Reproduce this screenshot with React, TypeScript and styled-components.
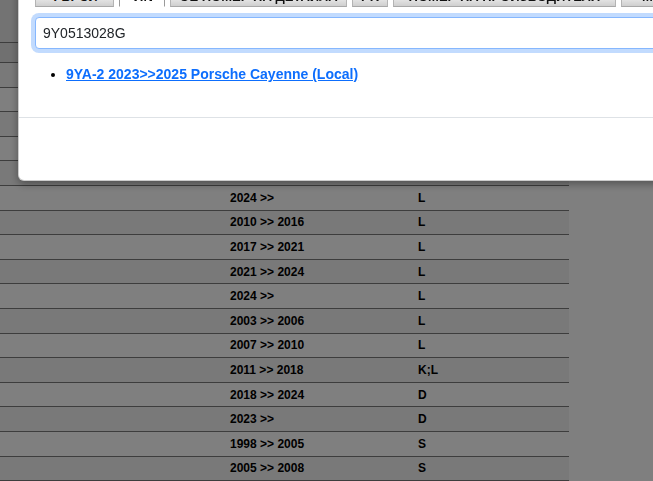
import { useEffect, useRef } from 'react';
import styled, { createGlobalStyle } from 'styled-components';

const GlobalStyle = createGlobalStyle`
  html, body {
    margin: 0;
    padding: 0;
    background: #fff;
    overflow: hidden;
    font-family: 'Liberation Sans', Arial, sans-serif;
  }
`;

const tabs = [
  { label: 'ТЪРСИ', width: 79, active: false },
  { label: 'VIN', width: 46, active: true },
  { label: 'OE НОМЕР НА ДЕТАЙЛА', width: 177, active: false },
  { label: 'PR', width: 36, active: false },
  { label: 'НОМЕР НА ПРОИЗВОДИТЕЛЯ', width: 223, active: false },
  { label: 'МОДЕЛ', width: 90, active: false },
];

const rows = [
  { years: '2018 >> 2022', code: 'L' },
  { years: '2022 >>', code: 'L' },
  { years: '2014 >> 2018', code: 'L' },
  { years: '2018 >> 2023', code: 'L' },
  { years: '2023 >>', code: 'L' },
  { years: '2024 >>', code: 'L' },
  { years: '2010 >> 2016', code: 'L' },
  { years: '2017 >> 2021', code: 'L' },
  { years: '2021 >> 2024', code: 'L' },
  { years: '2024 >>', code: 'L' },
  { years: '2003 >> 2006', code: 'L' },
  { years: '2007 >> 2010', code: 'L' },
  { years: '2011 >> 2018', code: 'K;L' },
  { years: '2018 >> 2024', code: 'D' },
  { years: '2023 >>', code: 'D' },
  { years: '1998 >> 2005', code: 'S' },
  { years: '2005 >> 2008', code: 'S' },
];

const App = () => {
  const inputRef = useRef<HTMLInputElement>(null);

  useEffect(() => {
    const el = inputRef.current;
    if (el) {
      el.focus();
      el.setSelectionRange(el.value.length, el.value.length);
    }
  }, []);

  return (
    <>
      <GlobalStyle />
      <Page>
        <TopArea />
        <Table>
          <thead>
            <HeadRow>
              <Th $width={222} />
              <Th $width={188} />
              <Th />
            </HeadRow>
          </thead>
          <tbody>
            {rows.map((row, i) => (
              <Row key={i} $odd={i % 2 === 0}>
                <Td />
                <Td>{row.years}</Td>
                <Td>{row.code}</Td>
              </Row>
            ))}
          </tbody>
        </Table>
      </Page>

      <Backdrop />

      <Modal>
        <ModalBody>
          <Tabs>
            {tabs.map(tab => (
              <Tab key={tab.label} $width={tab.width} $active={tab.active}>
                {tab.label}
              </Tab>
            ))}
          </Tabs>
          <SearchInput ref={inputRef} defaultValue='9Y0513028G' />
          <Results>
            <li>
              <a href='#'>9YA-2 2023&gt;&gt;2025 Porsche Cayenne (Local)</a>
            </li>
          </Results>
        </ModalBody>
        <ModalFooter />
      </Modal>
    </>
  );
};
export default App;

const Page = styled.div`
  width: 569px;
`;

const TopArea = styled.div`
  height: 42px;
  background: #e6e6e6;
`;

const Table = styled.table`
  width: 569px;
  border-collapse: collapse;
  font-size: 12px;
  font-weight: bold;
  color: #000;
`;

const HeadRow = styled.tr`
  height: 20px;
  background: #e0e0e0;
`;

const Th = styled.th<{ $width?: number }>`
  width: ${p => (p.$width ? `${p.$width}px` : 'auto')};
  border-top: 1px solid #7a7a7a;
  border-bottom: 1px solid #7a7a7a;
  padding: 0;
`;

const Row = styled.tr<{ $odd: boolean }>`
  height: 24.6px;
  background: ${p => (p.$odd ? '#f2f2f2' : '#fff')};
`;

const Td = styled.td`
  border-bottom: 1px solid #7a7a7a;
  padding: 0 8px;
  line-height: 14px;
`;

const Backdrop = styled.div`
  position: fixed;
  inset: 0;
  background: rgba(0, 0, 0, 0.5);
`;

const Modal = styled.div`
  position: fixed;
  top: -22px;
  left: 18px;
  width: 720px;
  background: #fff;
  border: 1px solid rgba(0, 0, 0, 0.2);
  border-radius: 6px;
  box-shadow: 0 3px 9px rgba(0, 0, 0, 0.35);
  font-family: 'Liberation Sans', Arial, sans-serif;
`;

const ModalBody = styled.div`
  padding: 0 16px 16px;
`;

const Tabs = styled.div`
  display: flex;
  gap: 5px;
`;

const Tab = styled.div<{ $width: number; $active: boolean }>`
  box-sizing: border-box;
  flex: none;
  width: ${p => p.$width}px;
  height: 28px;
  display: flex;
  align-items: flex-end;
  justify-content: center;
  padding-bottom: 3px;
  font-size: 13px;
  line-height: 13px;
  font-weight: bold;
  color: #111;
  white-space: nowrap;
  overflow: hidden;
  border: 1px solid ${p => (p.$active ? '#9a9a9a' : '#b4b4b4')};
  border-bottom-color: ${p => (p.$active ? '#fff' : '#a8a8a8')};
  background: ${p => (p.$active ? '#fff' : 'linear-gradient(#fafafa, #e8e8e8 70%, #cfcfcf)')};
`;

const SearchInput = styled.input`
  display: block;
  box-sizing: border-box;
  width: 100%;
  height: 32px;
  margin-top: 10px;
  padding: 0 7px;
  font-family: 'Liberation Sans', Arial, sans-serif;
  font-size: 14px;
  color: #212529;
  background: #fff;
  border: 1px solid #86b7fe;
  border-radius: 4px;
  box-shadow: 0 0 0 4px rgba(13, 110, 253, 0.25);
  outline: none;
  caret-color: #000;
`;

const Results = styled.ul`
  margin: 17px 0 19px;
  padding-left: 31px;
  font-size: 14px;
  line-height: 16px;

  a {
    color: #0d6efd;
    font-weight: bold;
    text-decoration: underline;
  }
`;

const ModalFooter = styled.div`
  height: 62px;
  border-top: 1px solid #dee2e6;
`;
